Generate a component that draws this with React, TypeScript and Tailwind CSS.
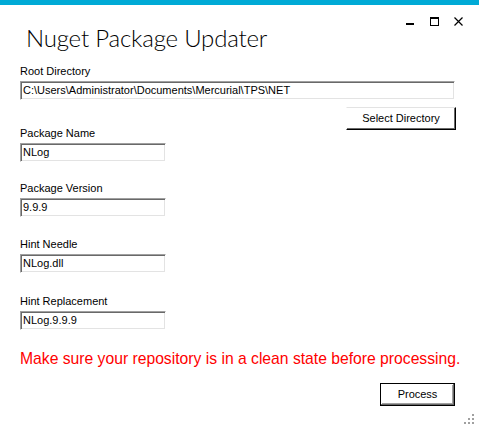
import React from 'react';

interface FieldProps {
  label: string;
  value: string;
  className?: string;
  inputClass?: string;
}

// Classic sunken WinForms text box
function Field({ label, value, className = '', inputClass = 'w-[146px]' }: FieldProps) {
  return (
    <div className={`flex flex-col ${className}`}>
      <label className="h-[13px] leading-[13px] text-[11px] text-black">{label}</label>
      <div
        className={`mt-[3px] h-[19px] ${inputClass} border border-t-[#a0a0a0] border-l-[#a0a0a0] border-b-white border-r-white bg-white shadow-[inset_1px_1px_0_#696969,inset_-1px_-1px_0_#e3e3e3] px-[2px] leading-[17px] text-[11px] text-black whitespace-nowrap overflow-hidden`}
      >
        {value}
      </div>
    </div>
  );
}

function WinButton({ children, className = '', isDefault = false }: { children: React.ReactNode; className?: string; isDefault?: boolean }) {
  return (
    <button
      className={`h-[23px] bg-white text-[11px] text-black leading-none ${
        isDefault
          ? 'border border-black shadow-[inset_-1px_-1px_0_#696969,inset_1px_1px_0_#ffffff,inset_-2px_-2px_0_#a0a0a0]'
          : 'border border-t-[#e3e3e3] border-l-white border-b-black border-r-black shadow-[inset_-1px_-1px_0_#696969]'
      } ${className}`}
    >
      {children}
    </button>
  );
}

export default function App() {
  return (
    <div className="w-[479px] h-[429px] bg-white flex flex-col overflow-hidden font-['Liberation_Sans',Arial,sans-serif]">
      <div className="h-[5px] bg-[#00aad6] shrink-0" />

      {/* Window chrome */}
      <div className="flex items-start">
        <h1 className="pl-[26px] pt-[18px] text-[24px] leading-[29px] tracking-[-0.2px] font-light text-black font-['Lato',sans-serif]">
          Nuget Package Updater
        </h1>
        <div className="ml-auto flex items-start pt-[6px] pr-[15px]">
          <svg width="10" height="10" viewBox="0 0 10 10" className="mt-[6px]">
            <rect x="0" y="6" width="8" height="2" fill="#000" />
          </svg>
          <svg width="10" height="10" viewBox="0 0 10 10" className="ml-[14px] mt-[6px]">
            <rect x="0.5" y="0.5" width="8" height="8" fill="none" stroke="#000" />
            <rect x="0" y="0" width="9" height="2" fill="#000" />
          </svg>
          <svg width="10" height="10" viewBox="0 0 10 10" className="ml-[14px] mt-[6px]">
            <path d="M0.5 0.5 L8.5 8.5 M8.5 0.5 L0.5 8.5" stroke="#000" strokeWidth="1.2" />
          </svg>
        </div>
      </div>

      {/* Form */}
      <div className="flex flex-col pl-[20px] pr-[24px]">
        <Field label="Root Directory" value="C:\Users\Administrator\Documents\Mercurial\TPS\NET" className="mt-[13px]" inputClass="w-full" />
        <div className="flex justify-end mt-[7px]">
          <WinButton className="w-[110px] -mr-[1px]">Select Directory</WinButton>
        </div>
        <Field label="Package Name" value="NLog" className="-mt-[3px]" />
        <Field label="Package Version" value="9.9.9" className="mt-[20px]" />
        <Field label="Hint Needle" value="NLog.dll" className="mt-[21px]" />
        <Field label="Hint Replacement" value="NLog.9.9.9" className="mt-[22px]" />

        <p className="mt-[20px] text-[15.7px] leading-[18px] text-[#ff0000] whitespace-nowrap">
          Make sure your repository is in a clean state before processing.
        </p>

        <div className="flex justify-end mt-[15px]">
          <WinButton isDefault className="w-[75px]">Process</WinButton>
        </div>
      </div>

      {/* Size grip */}
      <div className="flex justify-end pr-[4px] mt-auto pb-[4px]">
        <svg width="12" height="12" viewBox="0 0 12 12">
          <rect x="9" y="1" width="2" height="2" fill="#a0a0a0" />
          <rect x="5" y="5" width="2" height="2" fill="#a0a0a0" />
          <rect x="9" y="5" width="2" height="2" fill="#a0a0a0" />
          <rect x="1" y="9" width="2" height="2" fill="#a0a0a0" />
          <rect x="5" y="9" width="2" height="2" fill="#a0a0a0" />
          <rect x="9" y="9" width="2" height="2" fill="#a0a0a0" />
        </svg>
      </div>
    </div>
  );
}
